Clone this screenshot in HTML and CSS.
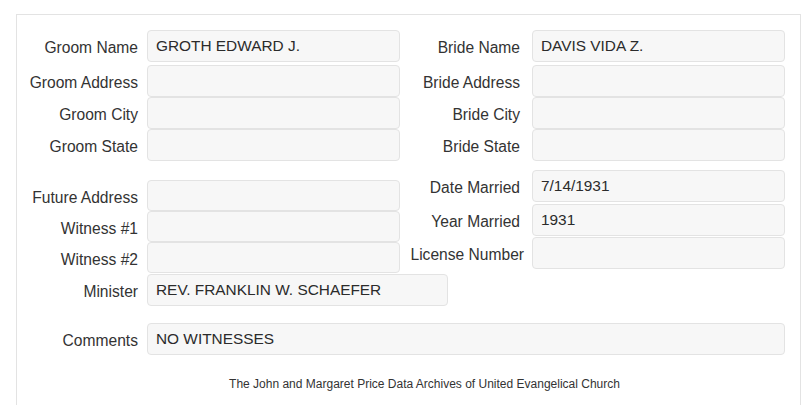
FILE: index.html
```html
<!DOCTYPE html>
<html>
<head>
<meta charset="utf-8">
<link rel="stylesheet" href="styles.css">
</head>
<body>
<div class="panel">
  <div class="top">
    <div class="col">
      <div class="row first"><div class="lbl">Groom Name</div><div class="field">GROTH EDWARD J.</div></div>
      <div class="row"><div class="lbl">Groom Address</div><div class="field"></div></div>
      <div class="row"><div class="lbl">Groom City</div><div class="field"></div></div>
      <div class="row"><div class="lbl">Groom State</div><div class="field"></div></div>
    </div>
    <div class="col right">
      <div class="row first"><div class="lbl">Bride Name</div><div class="field">DAVIS VIDA Z.</div></div>
      <div class="row"><div class="lbl">Bride Address</div><div class="field"></div></div>
      <div class="row"><div class="lbl">Bride City</div><div class="field"></div></div>
      <div class="row"><div class="lbl">Bride State</div><div class="field"></div></div>
    </div>
  </div>
  <div class="mid">
    <div class="col lower-left">
      <div class="row short"><div class="lbl">Future Address</div><div class="field"></div></div>
      <div class="row short"><div class="lbl">Witness #1</div><div class="field"></div></div>
      <div class="row short"><div class="lbl">Witness #2</div><div class="field"></div></div>
    </div>
    <div class="col right lower-right">
      <div class="row gap2"><div class="lbl">Date Married</div><div class="field">7/14/1931</div></div>
      <div class="row gap1"><div class="lbl">Year Married</div><div class="field">1931</div></div>
      <div class="row"><div class="lbl long">License Number</div><div class="field"></div></div>
    </div>
  </div>
  <div class="row minister"><div class="lbl">Minister</div><div class="field wide">REV. FRANKLIN W. SCHAEFER</div></div>
  <div class="row comments"><div class="lbl">Comments</div><div class="field full">NO WITNESSES</div></div>
  <div class="footer">The John and Margaret Price Data Archives of United Evangelical Church</div>
</div>
</body>
</html>
```

FILE: styles.css
```css
html, body {
  margin: 0;
  padding: 0;
  background: #ffffff;
}
body {
  font-family: "Liberation Sans", Arial, sans-serif;
  color: #333333;
  overflow: hidden;
}
.panel {
  margin: 14px 0 0 16px;
  width: 785px;
  height: 400px;
  border: 1px solid #e3e3e3;
  border-bottom: none;
  padding-top: 15px;
  box-sizing: border-box;
}
.top, .mid {
  display: flex;
}
.col {
  display: flex;
  flex-direction: column;
  width: 383px;
}
.col.right {
  width: 385px;
}
.row {
  display: flex;
  align-items: center;
  height: 32px;
}
.row.first {
  margin-bottom: 3px;
}
.row.short {
  height: 31px;
}
.row.gap2 { margin-bottom: 2px; }
.row.gap1 { margin-bottom: 1px; }
.lbl {
  width: 130px;
  flex: none;
  box-sizing: border-box;
  padding-right: 9px;
  text-align: right;
  font-size: 15.6px;
  white-space: nowrap;
  padding-top: 4px;
}
.right .lbl {
  width: 132px;
  padding-right: 12px;
}
.right .lbl.long {
  padding-right: 8px;
}
.field {
  width: 253px;
  height: 100%;
  flex: none;
  box-sizing: border-box;
  background: #f7f7f7;
  border: 1px solid #e3e3e3;
  border-radius: 4px;
  padding: 0 8px;
  display: flex;
  align-items: center;
  font-size: 15.4px;
  color: #2b2b2b;
  white-space: nowrap;
}
.field.wide { width: 301px; }
.field.full { width: 638px; }
.lower-left { margin-top: 19px; }
.lower-right { margin-top: 9px; }
.minister {
  margin-top: 1px;
}
.comments {
  margin-top: 17px;
}
.footer {
  margin-top: 21px;
  padding-left: 32px;
  text-align: center;
  font-size: 12px;
  line-height: 17px;
  color: #333333;
}
```
